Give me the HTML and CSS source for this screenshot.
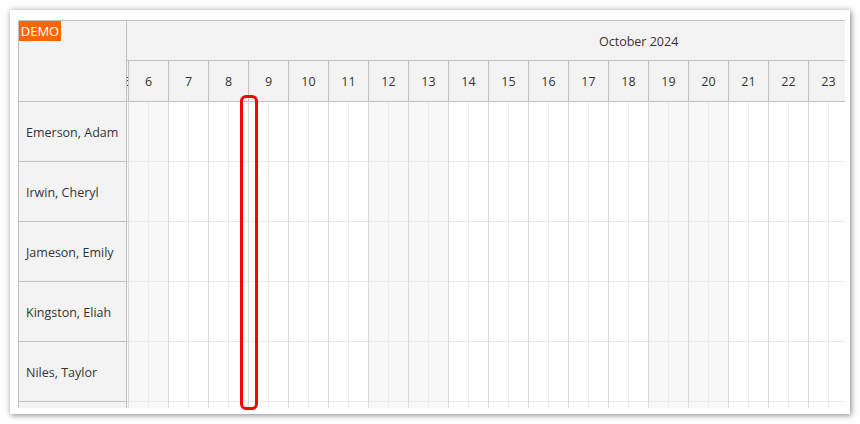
FILE: index.html
```html
<!DOCTYPE html>
<html>
<head>
<meta charset="utf-8">
<link rel="stylesheet" href="styles.css">
</head>
<body>
<div class="panel">
  <div class="scheduler">
    <div class="corner"><span class="demo">DEMO</span></div>
    <div class="timeheader">
      <div class="month"><span class="month-text">October 2024</span></div>
      <div class="days">
        <div class="day partial"><span>5</span></div>
        <div class="day">6</div>
        <div class="day">7</div>
        <div class="day">8</div>
        <div class="day">9</div>
        <div class="day">10</div>
        <div class="day">11</div>
        <div class="day">12</div>
        <div class="day">13</div>
        <div class="day">14</div>
        <div class="day">15</div>
        <div class="day">16</div>
        <div class="day">17</div>
        <div class="day">18</div>
        <div class="day">19</div>
        <div class="day">20</div>
        <div class="day">21</div>
        <div class="day">22</div>
        <div class="day">23</div>
      </div>
    </div>
    <div class="rows">
      <div class="rowhead">Emerson, Adam</div>
      <div class="rowhead">Irwin, Cheryl</div>
      <div class="rowhead">Jameson, Emily</div>
      <div class="rowhead">Kingston, Eliah</div>
      <div class="rowhead">Niles, Taylor</div>
      <div class="rowhead"></div>
    </div>
    <div class="grid">
      <div class="col partial weekend"></div>
      <div class="col weekend"></div>
      <div class="col"></div>
      <div class="col"></div>
      <div class="col"></div>
      <div class="col"></div>
      <div class="col"></div>
      <div class="col weekend"></div>
      <div class="col weekend"></div>
      <div class="col"></div>
      <div class="col"></div>
      <div class="col"></div>
      <div class="col"></div>
      <div class="col"></div>
      <div class="col weekend"></div>
      <div class="col weekend"></div>
      <div class="col"></div>
      <div class="col"></div>
      <div class="col"></div>
    </div>
  </div>
  <div class="highlight"></div>
</div>
</body>
</html>
```
FILE: styles.css
```css
html, body {
  margin: 0;
  padding: 0;
  background: #ffffff;
}
body {
  font-family: "Open Sans", "Liberation Sans", sans-serif;
  font-size: 12.5px;
  color: #333333;
}
.panel {
  position: relative;
  margin: 10px;
  width: 840px;
  height: 404px;
  box-sizing: border-box;
  padding: 10px 0 0 8px;
  background: #ffffff;
  box-shadow: 1px 1px 6px rgba(0, 0, 0, 0.5);
}
.scheduler {
  width: 827px;
  height: 388px;
  box-sizing: border-box;
  border-top: 1px solid #c0c0c0;
  border-left: 1px solid #c0c0c0;
  overflow: hidden;
  display: grid;
  grid-template-columns: 108px 718px;
  grid-template-rows: 81px 1fr;
}
.corner {
  background: #f3f3f3;
  border-right: 1px solid #c0c0c0;
  border-bottom: 1px solid #c0c0c0;
  position: relative;
}
.demo {
  position: absolute;
  left: 0;
  top: 0;
  width: 42px;
  height: 20px;
  line-height: 20px;
  background: #ff6600;
  color: #ffffff;
  text-align: center;
  font-size: 13px;
}
.timeheader {
  background: #f3f3f3;
  display: flex;
  flex-direction: column;
  overflow: hidden;
}
.month {
  height: 40px;
  box-sizing: border-box;
  border-bottom: 1px solid #c0c0c0;
  display: flex;
  align-items: center;
  padding-left: 472px;
  padding-top: 2px;
  white-space: nowrap;
}
.days {
  display: flex;
  height: 41px;
  box-sizing: border-box;
  border-bottom: 1px solid #c0c0c0;
}
.day {
  flex: 0 0 40px;
  box-sizing: border-box;
  border-right: 1px solid #c0c0c0;
  display: flex;
  align-items: center;
  justify-content: center;
}
.day.partial {
  flex: 0 0 2px;
  overflow: hidden;
  justify-content: flex-end;
}
.day.partial span {
  flex: 0 0 auto;
  margin-right: -3px;
}
.rows {
  display: flex;
  flex-direction: column;
}
.rowhead {
  flex: 0 0 60px;
  box-sizing: border-box;
  background: #f3f3f3;
  border-right: 1px solid #c0c0c0;
  border-bottom: 1px solid #c0c0c0;
  display: flex;
  align-items: center;
  padding-left: 7px;
  padding-top: 2px;
  white-space: nowrap;
}
.grid {
  display: flex;
  overflow: hidden;
}
.col {
  flex: 0 0 40px;
  box-sizing: border-box;
  border-right: 1px solid #dadada;
  background:
    linear-gradient(to right, transparent 19px, #ebebeb 19px, #ebebeb 20px, transparent 20px),
    repeating-linear-gradient(to bottom, transparent 0, transparent 59px, #eaeaea 59px, #eaeaea 60px),
    #ffffff;
}
.col.weekend {
  background:
    linear-gradient(to right, transparent 19px, #ebebeb 19px, #ebebeb 20px, transparent 20px),
    repeating-linear-gradient(to bottom, transparent 0, transparent 59px, #eaeaea 59px, #eaeaea 60px),
    #f8f8f8;
}
.col.partial {
  flex: 0 0 2px;
}
.highlight {
  position: absolute;
  left: 230px;
  top: 85px;
  width: 18px;
  height: 315px;
  box-sizing: border-box;
  border: 3px solid #ff0000;
  border-radius: 6px;
}
```
